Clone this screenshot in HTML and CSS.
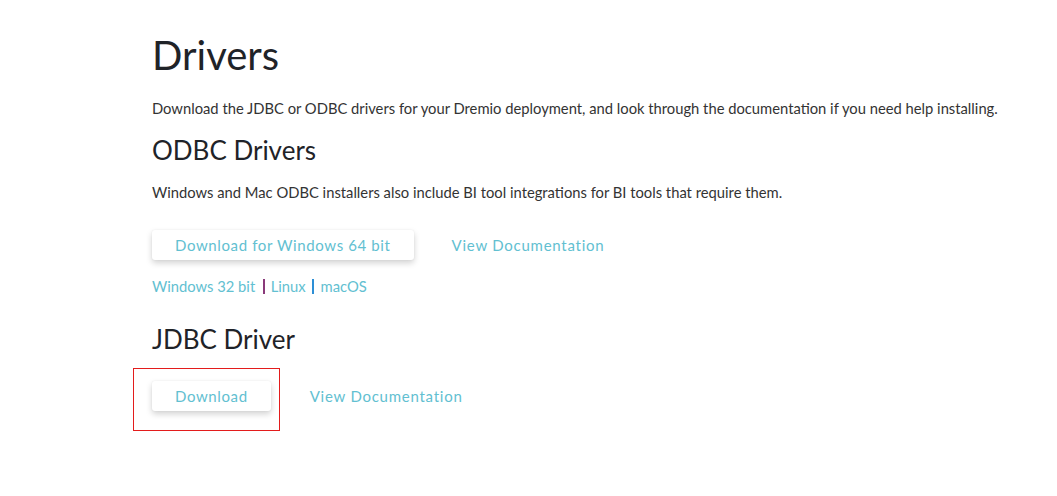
FILE: index.html
```html
<!DOCTYPE html>
<html>
<head>
<meta charset="utf-8">
<link rel="stylesheet" href="styles.css">
</head>
<body>
<main class="page">
  <h1 class="title">Drivers</h1>
  <p class="lead">Download the JDBC or ODBC drivers for your Dremio deployment, and look through the documentation if you need help installing.</p>

  <section class="odbc">
    <h2 class="section-title">ODBC Drivers</h2>
    <p class="lead">Windows and Mac ODBC installers also include BI tool integrations for BI tools that require them.</p>
    <div class="actions">
      <a class="btn">Download for Windows 64 bit</a>
      <a class="doc-link">View Documentation</a>
    </div>
    <div class="alt-links">
      <a class="alt">Windows 32 bit</a><span class="sep sep-purple"></span><a class="alt">Linux</a><span class="sep sep-blue"></span><a class="alt">macOS</a>
    </div>
  </section>

  <section class="jdbc">
    <h2 class="section-title">JDBC Driver</h2>
    <div class="actions jdbc-actions">
      <div class="highlight">
        <a class="btn">Download</a>
      </div>
      <a class="doc-link">View Documentation</a>
    </div>
  </section>
</main>
</body>
</html>
```

FILE: styles.css
```css
* { box-sizing: border-box; }
html, body { margin: 0; padding: 0; background: #fff; }
body {
  font-family: "Lato", "Liberation Sans", sans-serif;
  color: #333;
}
.page {
  padding: 31px 0 0 152px;
}
.title {
  margin: 0;
  font-size: 40px;
  line-height: 48px;
  font-weight: 400;
  color: #1f2328;
}
.lead {
  margin: 20px 0 0;
  font-size: 14.75px;
  line-height: 18px;
  color: #333;
}
.section-title {
  margin: 18px 0 0;
  font-size: 26px;
  line-height: 31px;
  font-weight: 400;
  color: #1f2328;
}
.odbc .lead { margin-top: 17px; }
.actions {
  display: flex;
  align-items: center;
  margin-top: 29px;
}
.btn {
  display: inline-block;
  height: 30px;
  line-height: 30px;
  padding: 0 23px;
  background: #fff;
  border-radius: 3px;
  box-shadow: 0 3px 6px rgba(0,0,0,0.18), 0 0 2px rgba(0,0,0,0.06);
  color: #62c0d1;
  font-size: 15px;
  letter-spacing: 0.62px;
}
.doc-link {
  margin-left: 38px;
  color: #62c0d1;
  font-size: 15px;
  line-height: 30px;
  letter-spacing: 0.75px;
}
.alt-links {
  display: flex;
  align-items: center;
  margin-top: 17px;
  font-size: 14.75px;
  line-height: 18px;
}
.alt { color: #62c0d1; }
.sep {
  display: inline-block;
  width: 2px;
  height: 15px;
}
.sep-purple { background: #8a3a7a; margin: 0 6px 0 7.5px; }
.sep-blue { background: #2d8fd6; margin: 0 6.5px 0 6.5px; }
.jdbc .section-title { margin-top: 29px; }
.jdbc-actions {
  margin-top: 13px;
  align-items: flex-start;
}
.highlight {
  border: 1px solid #e31c1c;
  padding: 12px 8px 19px 18px;
  margin-left: -19px;
}
.jdbc-actions .doc-link {
  margin-left: 30px;
  margin-top: 13px;
}
```
